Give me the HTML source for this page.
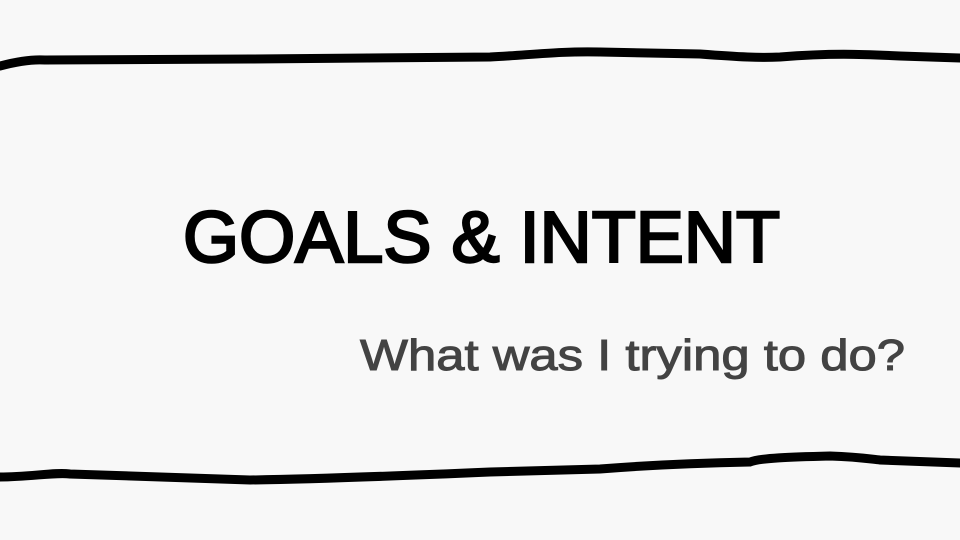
<!DOCTYPE html>
<html><head><meta charset="utf-8"><style>
html,body{margin:0;padding:0;background:#f8f8f8;}
svg{display:block;}
</style></head><body>
<svg width="960" height="540" viewBox="0 0 960 540" xmlns="http://www.w3.org/2000/svg">
<rect width="960" height="540" fill="#f8f8f8"/>
<path d="M0,66 C15,62 30,59 45,60 L250,59 L490,57 C530,55 560,51 600,52 L700,54 C740,57 760,58 780,57 C830,53 860,54 900,56 L960,58" fill="none" stroke="#000" stroke-width="9" stroke-linecap="round"/>
<path d="M0,477 C30,477 55,472 70,474 L250,480 C320,479 420,475 490,472 L600,469 C650,465 700,463 750,462 C760,458 790,457 830,456 C860,457 870,459 880,460 L960,463" fill="none" stroke="#000" stroke-width="9" stroke-linecap="round"/>
<text x="183" y="262" font-family="Liberation Sans, sans-serif" font-size="72" fill="#000" stroke="#000" stroke-width="2.5" textLength="597" lengthAdjust="spacingAndGlyphs">GOALS &amp; INTENT</text>
<text x="360" y="370" font-family="Liberation Sans, sans-serif" font-size="44" fill="#434343" stroke="#434343" stroke-width="1" textLength="545" lengthAdjust="spacingAndGlyphs">What was I trying to do?</text>
</svg>
</body></html>
